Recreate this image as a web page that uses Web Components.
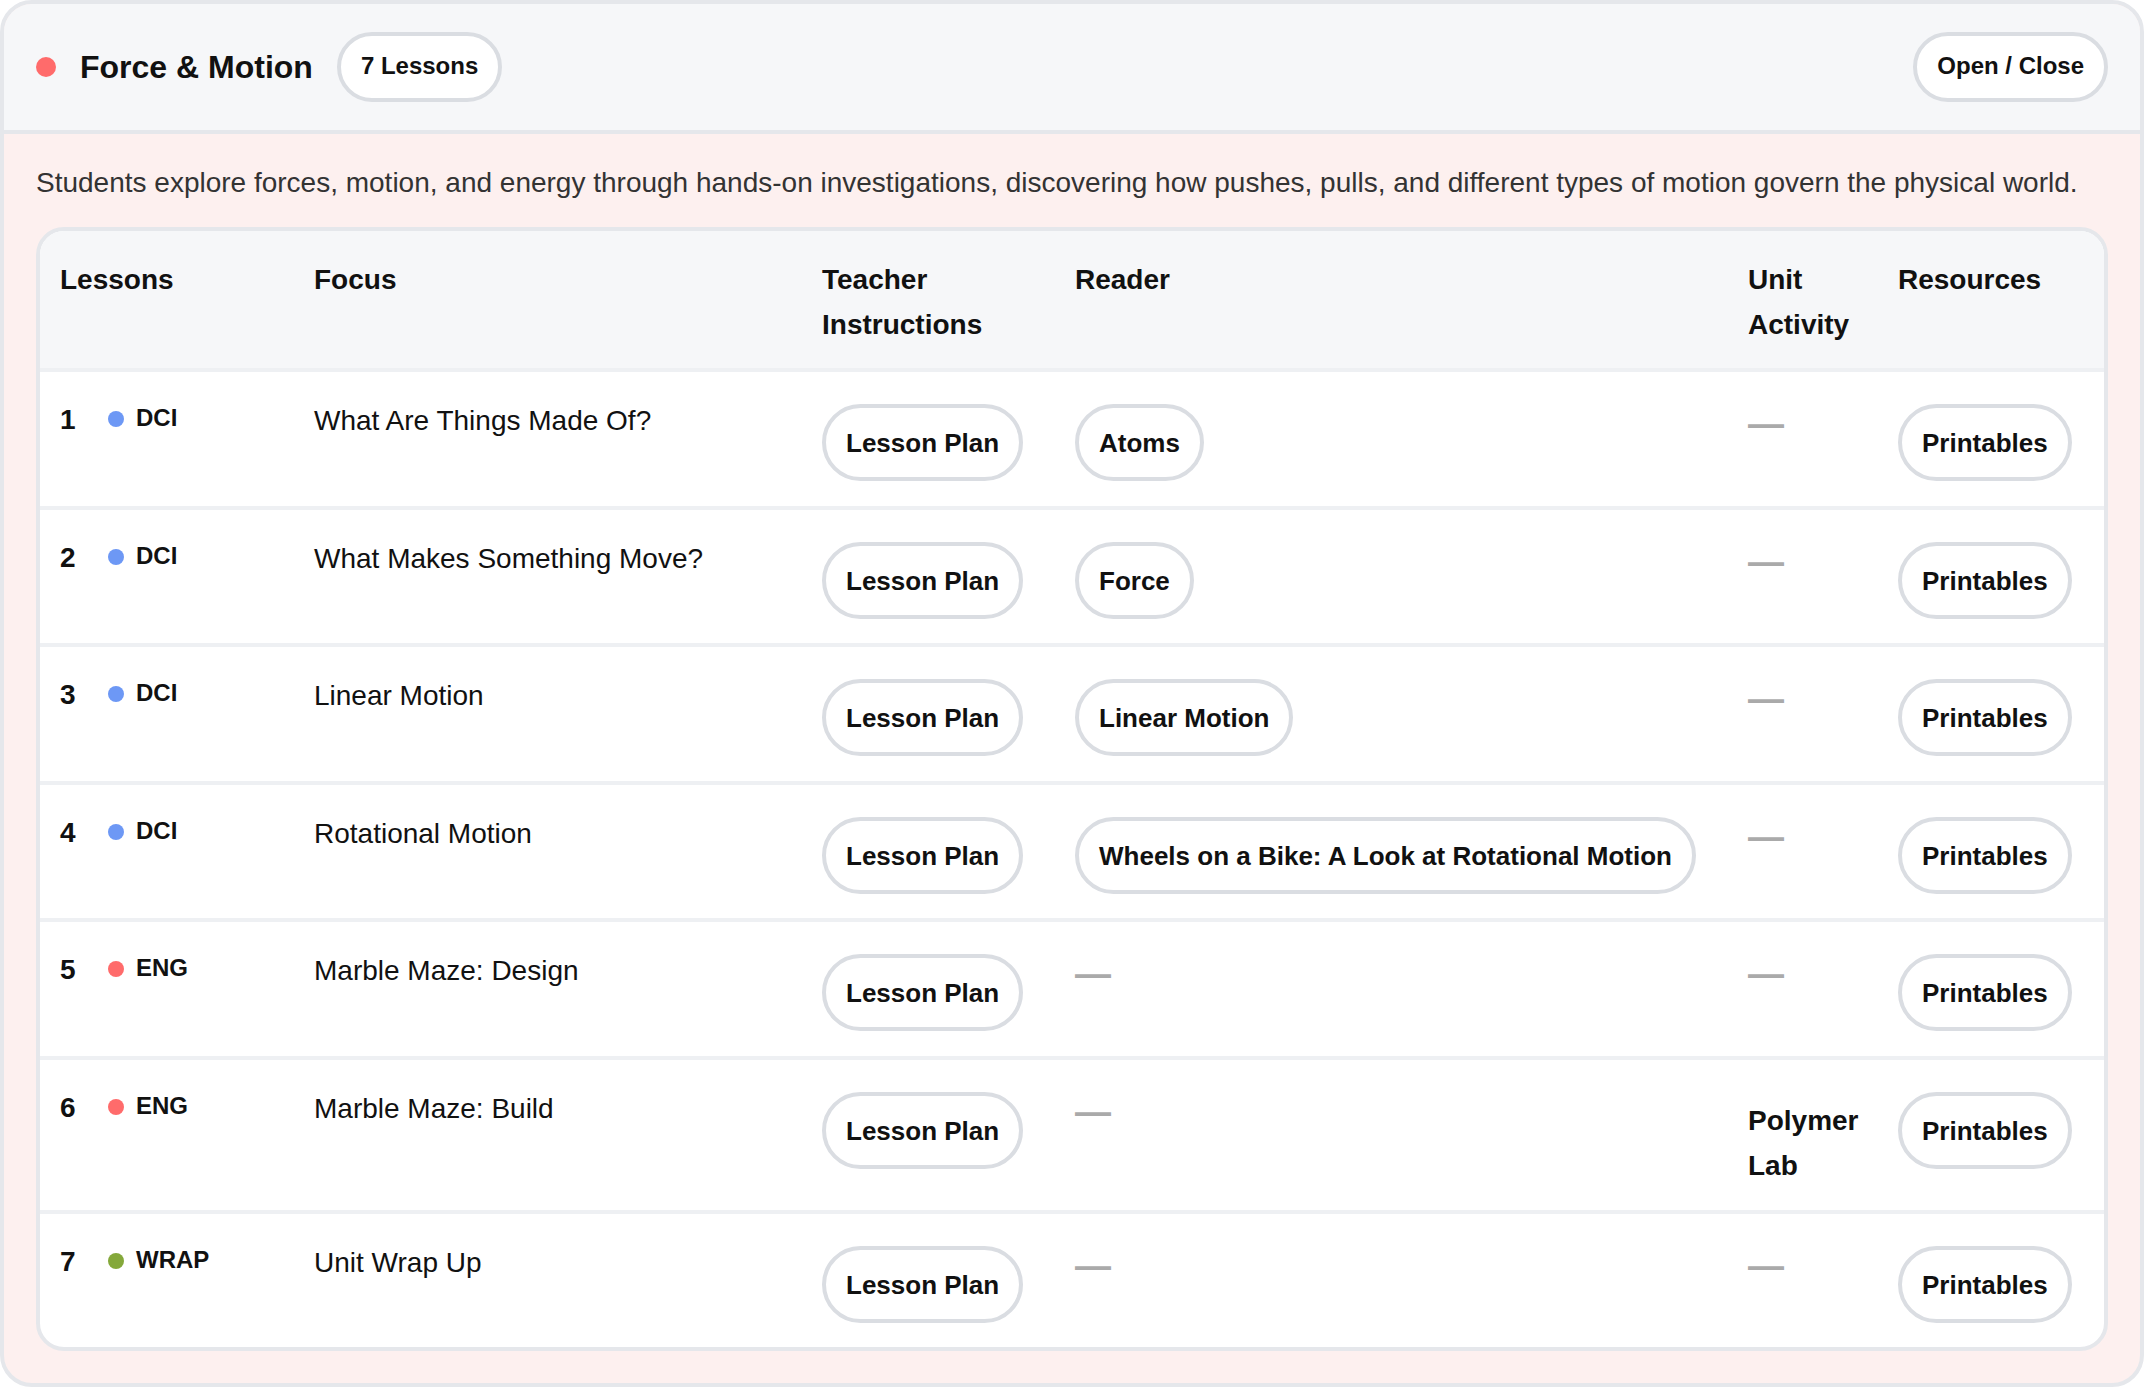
<!DOCTYPE html>
<html>
<head>
<meta charset="utf-8">
<title>Force &amp; Motion</title>
<style>
  html, body { margin: 0; background: #fff; }
  body { font-family: "Liberation Sans", Arial, sans-serif; color: #111; }
</style>
</head>
<body>
<unit-card title="Force &amp; Motion" count="7 Lessons" description="Students explore forces, motion, and energy through hands-on investigations, discovering how pushes, pulls, and different types of motion govern the physical world.">
  <lesson-table>
    <lesson-row num="1" tag="DCI" tone="blue" focus="What Are Things Made Of?" reader="Atoms"></lesson-row>
    <lesson-row num="2" tag="DCI" tone="blue" focus="What Makes Something Move?" reader="Force"></lesson-row>
    <lesson-row num="3" tag="DCI" tone="blue" focus="Linear Motion" reader="Linear Motion"></lesson-row>
    <lesson-row num="4" tag="DCI" tone="blue" focus="Rotational Motion" reader="Wheels on a Bike: A Look at Rotational Motion"></lesson-row>
    <lesson-row num="5" tag="ENG" tone="red" focus="Marble Maze: Design"></lesson-row>
    <lesson-row num="6" tag="ENG" tone="red" focus="Marble Maze: Build" activity="Polymer Lab"></lesson-row>
    <lesson-row num="7" tag="WRAP" tone="green" focus="Unit Wrap Up"></lesson-row>
  </lesson-table>
</unit-card>

<script>
class PillTag extends HTMLElement {
  constructor() {
    super();
    this.attachShadow({ mode: "open" });
    this.shadowRoot.innerHTML = `
    <style>
      :host{
        display: inline-flex;
        align-items: center;
        box-sizing: border-box;
        height: var(--pill-height, 77px);
        padding: var(--pill-pad, 2px 20px 0);
        background: #fff;
        border: 4px solid #dadde2;
        border-radius: 999px;
        font-size: var(--pill-size, 26px);
        font-weight: 700;
        color: #111;
        white-space: nowrap;
      }
    </style>
    <slot></slot>`;
  }
}
customElements.define("pill-tag", PillTag);

class UnitCard extends HTMLElement {
  constructor() {
    super();
    this.attachShadow({ mode: "open" });
  }

  connectedCallback() {
    this.shadowRoot.innerHTML = `
    <style>
      :host{
        display: block;
        box-sizing: border-box;
        width: 2144px;
        height: 1387px;
        background: #fdf0ef;
        border: 4px solid #e5e7eb;
        border-radius: 32px;
        overflow: hidden;
      }
      header{
        display: flex;
        align-items: center;
        box-sizing: border-box;
        height: 130px;
        padding: 0 32px;
        background: #f6f7f9;
        border-bottom: 4px solid #e5e7eb;
        --pill-height: 70px;
        --pill-size: 24px;
        --pill-pad: 0 20px 2px;
      }
      .dot{
        width: 20px;
        height: 20px;
        border-radius: 50%;
        background: #ff6b6b;
        margin-right: 24px;
      }
      h2{
        margin: 0 24px 0 0;
        font-size: 32px;
        line-height: 45px;
        font-weight: 700;
        color: #111;
      }
      .toggle{ margin-left: auto; }
      p{
        margin: 0;
        padding: 28px 32px 23px;
        font-size: 28px;
        line-height: 42px;
        color: #333;
        white-space: nowrap;
      }
      .body{ padding: 0 32px; }
    </style>
    <header>
      <span class="dot"></span>
      <h2>${this.getAttribute("title")}</h2>
      <pill-tag>${this.getAttribute("count")}</pill-tag>
      <pill-tag class="toggle">Open / Close</pill-tag>
    </header>
    <p>${this.getAttribute("description")}</p>
    <div class="body"><slot></slot></div>`;
  }
}
customElements.define("unit-card", UnitCard);

class LessonTable extends HTMLElement {
  constructor() {
    super();
    this.attachShadow({ mode: "open" });
    this.shadowRoot.innerHTML = `
    <style>
      :host{
        display: block;
        --cols: 254px 508px 253px 673px 150px 226px;
        background: #fff;
        border: 4px solid #e5e7eb;
        border-radius: 28px;
        overflow: hidden;
      }
      .head{
        display: grid;
        grid-template-columns: var(--cols);
        box-sizing: border-box;
        height: 141px;
        background: #f6f7f9;
        border-bottom: 4px solid #eef0f3;
        font-size: 28px;
        line-height: 45px;
        font-weight: 700;
        color: #111;
      }
      .head div{ padding: 26px 20px 0; }
    </style>
    <div class="head">
      <div>Lessons</div>
      <div>Focus</div>
      <div>Teacher Instructions</div>
      <div>Reader</div>
      <div>Unit Activity</div>
      <div>Resources</div>
    </div>
    <slot></slot>`;
  }
}
customElements.define("lesson-table", LessonTable);

class LessonRow extends HTMLElement {
  constructor() {
    super();
    this.attachShadow({ mode: "open" });
  }

  connectedCallback() {
    const tones = { blue: "#6d98f5", red: "#ff6b6b", green: "#84a83a" };
    const dash = `<span class="dash">—</span>`;
    const reader = this.getAttribute("reader");
    const activity = this.getAttribute("activity");

    this.shadowRoot.innerHTML = `
    <style>
      :host{
        display: grid;
        grid-template-columns: var(--cols);
        box-sizing: border-box;
        border-bottom: 4px solid #eef0f3;
        font-size: 28px;
        line-height: 45px;
        color: #111;
      }
      :host(:last-child){ border-bottom: 0; }
      .cell{ padding: 32px 20px 24.5px; }
      .text{ padding-top: 26px; }
      .lesson{
        display: flex;
        align-items: flex-start;
        padding-top: 25px;
      }
      .num{ width: 48px; font-weight: 700; }
      .tag{
        display: flex;
        align-items: center;
        gap: 12px;
        font-size: 24px;
        line-height: 38px;
        font-weight: 700;
        padding-top: 2px;
      }
      .dot{
        width: 16px;
        height: 16px;
        border-radius: 50%;
        background: var(--tone);
        margin-top: 2px;
      }
      .dash{
        display: block;
        font-size: 36px;
        line-height: 45px;
        font-weight: 700;
        color: #aaa;
      }
      .activity{ font-weight: 700; padding-top: 38px; padding-bottom: 22px; }
      .none{ padding-top: 29px; padding-bottom: 0; }
    </style>
    <div class="cell lesson">
      <span class="num">${this.getAttribute("num")}</span>
      <span class="tag" style="--tone:${tones[this.getAttribute("tone")]}"><span class="dot"></span>${this.getAttribute("tag")}</span>
    </div>
    <div class="cell text">${this.getAttribute("focus")}</div>
    <div class="cell"><pill-tag>Lesson Plan</pill-tag></div>
    ${reader ? `<div class="cell"><pill-tag>${reader}</pill-tag></div>` : `<div class="cell none">${dash}</div>`}
    ${activity ? `<div class="cell activity">${activity}</div>` : `<div class="cell none">${dash}</div>`}
    <div class="cell"><pill-tag>Printables</pill-tag></div>`;
  }
}
customElements.define("lesson-row", LessonRow);
</script>
</body>
</html>
